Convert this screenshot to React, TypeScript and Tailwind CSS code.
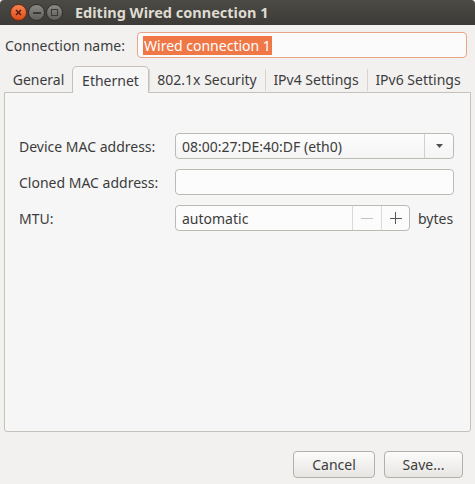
import React from "react";

const font = { fontFamily: '"Noto Sans", "Open Sans", sans-serif' };

export default function App() {
  return (
    <div className="w-[475px] h-[484px] bg-[#f2f1f0] flex flex-col text-[14px] text-[#3c3c3c] overflow-hidden" style={font}>
      {/* Title bar */}
      <div className="h-[25px] shrink-0 flex items-center bg-gradient-to-b from-[#4b4a45] to-[#3c3b37] rounded-t-[4px]">
        <div className="flex items-center gap-[1px] pl-[10px]">
          <div className="w-[17px] h-[17px] rounded-full bg-gradient-to-b from-[#f5834f] to-[#df4a16] border border-[#6b2c12] flex items-center justify-center">
            <svg width="7" height="7" viewBox="0 0 7 7">
              <path d="M1 1L6 6M6 1L1 6" stroke="#4a1a08" strokeWidth="1.4" />
            </svg>
          </div>
          <div className="w-[17px] h-[17px] rounded-full bg-gradient-to-b from-[#8a8984] to-[#5f5e5a] border border-[#2f2e2b] flex items-center justify-center">
            <div className="w-[8px] h-[2px] bg-[#3a3935]" />
          </div>
          <div className="w-[17px] h-[17px] rounded-full bg-gradient-to-b from-[#8a8984] to-[#5f5e5a] border border-[#2f2e2b] flex items-center justify-center">
            <div className="w-[7px] h-[7px] border-[1.5px] border-[#3a3935]" />
          </div>
        </div>
        <div className="ml-[12px] text-[#dfdbd2] font-bold text-[14.5px] leading-none">Editing Wired connection 1</div>
      </div>

      {/* Connection name */}
      <div className="flex items-center mt-[7px] pl-[5px] pr-[8px] h-[26px]">
        <div className="w-[132px] shrink-0">Connection name:</div>
        <div className="flex-1 h-[26px] rounded-[4px] border border-[#e9a486] bg-[#fbfbfb] flex items-center pl-[5px]">
          <span className="bg-[#f07746] text-white px-[1px] leading-[19px]">Wired connection 1</span>
        </div>
      </div>

      {/* Tabs */}
      <div className="mt-[8px] px-[4px] flex-1 flex flex-col">
        <div className="flex items-end h-[26px] pl-[1px]">
          <Tab w={67} label="General" />
          <div className="w-[77px] h-[27px] -mb-[1px] border border-b-0 border-[#c5c2bd] rounded-t-[5px] bg-[#f6f6f6] flex items-center justify-center relative z-10">
            Ethernet
          </div>
          <Tab w={116} label="802.1x Security" sep />
          <Tab w={102} label="IPv4 Settings" sep />
          <Tab w={102} label="IPv6 Settings" sep />
        </div>
        <div className="h-[340px] border border-[#c5c2bd] rounded-b-[3px] bg-[#f6f6f6] pt-[40px] pl-[14px] pr-[16px] flex flex-col gap-[10px]">
          <Row label="Device MAC address:">
            <div className="flex-1 h-[26px] rounded-[4px] border border-[#bdb9b3] bg-gradient-to-b from-[#fdfdfd] to-[#f4f4f4] flex items-center">
              <div className="flex-1 pl-[6px]">08:00:27:DE:40:DF (eth0)</div>
              <div className="w-[29px] h-full border-l border-[#d4d1cc] flex items-center justify-center">
                <svg width="9" height="6" viewBox="0 0 9 6"><path d="M1 1L8 1L4.5 5Z" fill="#505050" /></svg>
              </div>
            </div>
          </Row>
          <Row label="Cloned MAC address:">
            <div className="flex-1 h-[26px] rounded-[4px] border border-[#bdb9b3] bg-[#fcfcfc]" />
          </Row>
          <Row label="MTU:">
            <div className="w-[235px] h-[26px] rounded-[4px] border border-[#bdb9b3] bg-[#fcfcfc] flex items-center">
              <div className="flex-1 pl-[6px]">automatic</div>
              <div className="w-[29px] h-full border-l border-[#dcd9d4] flex items-center justify-center">
                <div className="w-[12px] h-[1px] bg-[#c4c2be]" />
              </div>
              <div className="w-[28px] h-full border-l border-[#dcd9d4] flex items-center justify-center relative">
                <div className="w-[12px] h-[1px] bg-[#555]" />
                <div className="absolute w-[1px] h-[12px] bg-[#555]" />
              </div>
            </div>
            <div className="ml-[8px]">bytes</div>
          </Row>
        </div>
      </div>

      {/* Buttons */}
      <div className="flex justify-end gap-[9px] pr-[12px] pb-[7px] pt-[19px]">
        <button className="w-[82px] h-[27px] rounded-[4px] border border-[#b3afa9] bg-gradient-to-b from-[#fbfbfa] to-[#e8e6e3]">Cancel</button>
        <button className="w-[79px] h-[27px] rounded-[4px] border border-[#b3afa9] bg-gradient-to-b from-[#fbfbfa] to-[#e8e6e3]">Save...</button>
      </div>
    </div>
  );
}

function Tab({ w, label, sep }: { w: number; label: string; sep?: boolean }) {
  return (
    <div className="h-[26px] flex items-center justify-center relative" style={{ width: w }}>
      {sep && <div className="absolute left-0 top-[3px] bottom-[1px] w-[1px] bg-[#d8d5d0]" />}
      {label}
    </div>
  );
}

function Row({ label, children }: { label: string; children: React.ReactNode }) {
  return (
    <div className="flex items-center h-[26px]">
      <div className="w-[156px] shrink-0">{label}</div>
      {children}
    </div>
  );
}
